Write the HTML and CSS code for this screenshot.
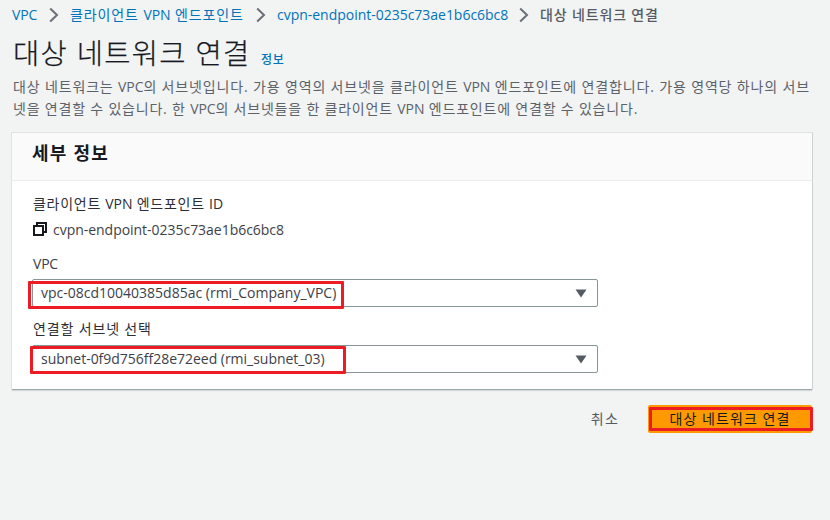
FILE: index.html
```
<!DOCTYPE html>
<html lang="ko">
<head>
<meta charset="utf-8">
<title>대상 네트워크 연결</title>
<link rel="stylesheet" href="styles.css">
</head>
<body>
<nav class="crumbs">
  <a class="c1">VPC</a>
  <svg class="chev" viewBox="0 0 10 16"><path d="M1.2 1.5 8 8 1.2 14.500"/></svg>
  <a class="c2">클라이언트 <span class="lat">VPN</span> 엔드포인트</a>
  <svg class="chev" viewBox="0 0 10 16"><path d="M1.2 1.5 8 8 1.2 14.500"/></svg>
  <a class="c3">cvpn-endpoint-0235c73ae1b6c6bc8</a>
  <svg class="chev" viewBox="0 0 10 16"><path d="M1.2 1.5 8 8 1.2 14.500"/></svg>
  <span class="here">대상 네트워크 연결</span>
</nav>
<header class="heading">
  <h1>대상 네트워크 연결</h1>
  <a class="info">정보</a>
</header>
<p class="desc">
  <span class="line l1">대상 네트워크는 <span class="lat">VPC</span>의 서브넷입니다. 가용 영역의 서브넷을 클라이언트 <span class="lat">VPN</span> 엔드포인트에 연결합니다. 가용 영역당 하나의 서브</span>
  <span class="line l2">넷을 연결할 수 있습니다. 한 <span class="lat">VPC</span>의 서브넷들을 한 클라이언트 <span class="lat">VPN</span> 엔드포인트에 연결할 수 있습니다.</span>
</p>
<section class="panel">
  <div class="panel-head"><h2>세부 정보</h2></div>
  <div class="panel-body">
    <div class="label">클라이언트 <span class="lat">VPN</span> 엔드포인트 <span class="lat">ID</span></div>
    <div class="value">
      <svg class="copy" viewBox="0 0 14 14"><path d="M1 4h9v9H1zM4 4V1h9v9h-3"/></svg>
      <span class="id">cvpn-endpoint-0235c73ae1b6c6bc8</span>
    </div>
    <div class="label vpc-label">VPC</div>
    <div class="select">
      <span class="s1">vpc-08cd10040385d85ac (rmi_Company_VPC)</span>
      <svg class="caret" viewBox="0 0 12 9"><path d="M.5.5h11L6 8.500z"/></svg>
      <i class="mark mark-vpc"></i>
    </div>
    <div class="label subnet-label">연결할 서브넷 선택</div>
    <div class="select">
      <span class="s2">subnet-0f9d756ff28e72eed (rmi_subnet_03)</span>
      <svg class="caret" viewBox="0 0 12 9"><path d="M.5.5h11L6 8.500z"/></svg>
      <i class="mark mark-subnet"></i>
    </div>
  </div>
</section>
<footer class="actions">
  <a class="cancel">취소</a>
  <button class="primary">대상 네트워크 연결<i class="mark mark-button"></i></button>
</footer>
</body>
</html>
```
FILE: styles.css
```
* { box-sizing: border-box; }
body {
  margin: 0;
  width: 830px;
  height: 520px;
  padding: 0 18px 0 12px;
  overflow: hidden;
  background: #f2f3f3;
  color: #16191f;
  font: 14px/22px "Open Sans", "Noto Sans CJK KR", sans-serif;
  white-space: nowrap;
}
.lat { letter-spacing: -.1px; }
.crumbs { display: flex; align-items: center; height: 30px; color: #545b64; }
.crumbs a, .info { color: #0073bb; }
.chev { width: 10px; height: 16px; margin: 0 11px; flex: none; fill: none; stroke: #687078; stroke-width: 2; }
.c1 { width: 26px; letter-spacing: -.1px; }
.c2 { width: 175px; letter-spacing: .9px; }
.c3 { width: 231px; letter-spacing: -.02px; }
.here { letter-spacing: .85px; font-weight: 500; }
.heading { display: flex; height: 46px; align-items: center; }
h1 { margin: 0; width: 249px; padding-left: 1px; font-size: 28.5px; font-weight: 300; line-height: 46px; letter-spacing: 1.3px; -webkit-text-stroke: .25px #16191f; }
.info { padding-top: 14px; font-size: 12px; font-weight: 500; letter-spacing: .7px; }
.desc { margin: 0; height: 56px; padding-left: 1px; color: #5b626a; }
.line { display: block; }
.l1 { letter-spacing: .85px; }
.l2 { letter-spacing: .8px; }
.panel {
  width: 800px;
  height: 256px;
  margin-top: 1px;
  background: #fff;
  box-shadow: 0 1px 0 #9ba7a8, 1px 0 0 #ccd2d3, 0 0 0 1px #dfe3e4, 0 2px 1px #d5dbdb;
}
.panel-head { height: 48px; padding: 0 20px; background: #fafafa; border-bottom: 1px solid #eaeded; }
h2 { margin: 0; font-size: 18px; font-weight: 700; line-height: 41px; letter-spacing: 1.2px; }
.panel-body { padding: 12px 20px 0; }
.label { height: 22px; padding-left: 1px; letter-spacing: .72px; color: #2b2e34; }
.value { display: flex; align-items: center; height: 30px; padding-left: 1px; color: #3d4148; letter-spacing: -.03px; }
.copy { width: 14px; height: 14px; margin: -2px 6px 0 0; fill: none; stroke: #16191f; stroke-width: 2; }
.vpc-label { margin-top: 8px; letter-spacing: -.2px; color: #3d4148; }
.subnet-label { margin-top: 11px; letter-spacing: .85px; }
.select {
  position: relative;
  display: flex;
  align-items: center;
  justify-content: space-between;
  width: 566px;
  height: 28px;
  margin-top: 4px;
  padding: 0 10px 0 8px;
  border: 1px solid #879596;
  border-radius: 2px;
  color: #3d4148;
}
.subnet-label + .select { margin-top: 5px; }
.s2 { letter-spacing: -.02px; }
.caret { width: 12px; height: 9px; fill: #545b64; }
.mark { position: absolute; border: 3px solid #ed1c24; border-radius: 1px; }
.mark-vpc { left: -5px; top: 1px; width: 316px; height: 28px; }
.mark-subnet { left: -3px; top: 0; width: 316px; height: 28px; }
.actions { display: flex; justify-content: flex-end; align-items: center; height: 28px; margin-top: 16px; }
.cancel { margin-right: 29px; color: #545b64; letter-spacing: 1.2px; }
.primary {
  position: relative;
  width: 164px;
  height: 28px;
  padding: 0;
  border: 0;
  border-radius: 2px;
  background: #ff9900;
  color: #16191f;
  font: inherit;
  letter-spacing: 1.05px;
}
.mark-button { left: 1px; top: 2px; width: 164px; height: 24px; }
```
